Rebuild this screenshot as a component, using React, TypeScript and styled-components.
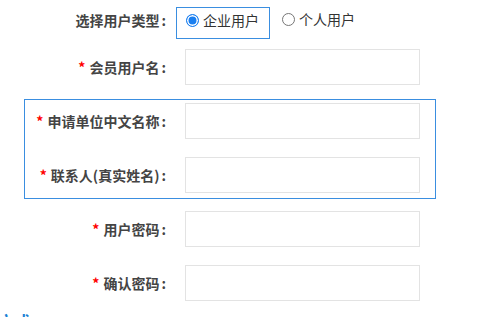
import styled, { createGlobalStyle } from "styled-components";

const GlobalStyle = createGlobalStyle`
  body {
    margin: 0;
    background: #ffffff;
    font-family: "Noto Sans CJK SC", "Noto Sans", sans-serif;
    overflow: hidden;
  }
`;

const Form = styled.div`
  display: flex;
  flex-direction: column;
  gap: 18px;
  padding-top: 7px;
`;

const RadioRow = styled.div`
  display: flex;
  align-items: flex-start;
  margin-bottom: -8px;
`;

const Label = styled.div<{ $width: number }>`
  width: ${(p) => p.$width}px;
  flex-shrink: 0;
  text-align: right;
  font-size: 14px;
  font-weight: 700;
  line-height: 26px;
  color: #444444;
  white-space: nowrap;
`;

const Colon = styled.span`
  padding-left: 2px;
  padding-right: 1px;
`;

const Star = styled.span`
  color: #ff0000;
  margin-right: 4px;
`;

const TypeBox = styled.div`
  margin-left: 9px;
  width: 94px;
  height: 32px;
  box-sizing: border-box;
  border: 1px solid #3a8ee0;
  padding: 0 9px;
  display: flex;
  align-items: flex-start;
`;

const RadioOption = styled.label<{ $offset?: number }>`
  display: flex;
  align-items: center;
  gap: 4px;
  height: 24px;
  margin-left: ${(p) => p.$offset ?? 0}px;
  font-size: 14px;
  color: #333333;
  white-space: nowrap;
`;

const RadioDot = styled.span<{ $checked?: boolean }>`
  width: 13px;
  height: 13px;
  box-sizing: border-box;
  border-radius: 50%;
  border: ${(p) => (p.$checked ? "1.5px solid #1a7ff0" : "1px solid #767676")};
  background: ${(p) => (p.$checked ? "#1a7ff0" : "#ffffff")};
  box-shadow: ${(p) => (p.$checked ? "inset 0 0 0 1.5px #ffffff" : "none")};
`;

const Row = styled.div`
  display: flex;
  align-items: center;
`;

const Input = styled.input`
  margin: 0 0 0 18px;
  width: 235px;
  height: 36px;
  box-sizing: border-box;
  border: 1px solid #e3e3e3;
  outline: none;
  padding: 0 8px;
  font-size: 14px;
`;

const CompanyBox = styled.div`
  margin: -4px 0 -6px 24px;
  width: 412px;
  box-sizing: border-box;
  border: 1px solid #3a8ee0;
  padding: 3px 0 5px;
  display: flex;
  flex-direction: column;
  gap: 18px;
`;

const SectionTitle = styled.div`
  margin: -6px 0 0 -34px;
  font-size: 16px;
  line-height: 16px;
  font-weight: 700;
  color: #1a7fd4;
`;

const companyFields = ["申请单位中文名称", "联系人(真实姓名)"];
const passwordFields = ["用户密码", "确认密码"];

function Field({ label, width, type = "text" }: { label: string; width: number; type?: string }) {
  return (
    <Row>
      <Label $width={width}>
        <Star>*</Star>
        {label}
        <Colon>:</Colon>
      </Label>
      <Input type={type} />
    </Row>
  );
}

export default function App() {
  return (
    <>
      <GlobalStyle />
      <Form>
        <RadioRow>
          <Label $width={167}>
            选择用户类型<Colon>:</Colon>
          </Label>
          <TypeBox>
            <RadioOption>
              <RadioDot $checked />
              企业用户
            </RadioOption>
          </TypeBox>
          <RadioOption $offset={12}>
            <RadioDot />
            个人用户
          </RadioOption>
        </RadioRow>
        <Field label="会员用户名" width={167} />
        <CompanyBox>
          {companyFields.map((label) => (
            <Field key={label} label={label} width={142} />
          ))}
        </CompanyBox>
        {passwordFields.map((label) => (
          <Field key={label} label={label} width={167} type="password" />
        ))}
        <SectionTitle>联系方式</SectionTitle>
      </Form>
    </>
  );
}
